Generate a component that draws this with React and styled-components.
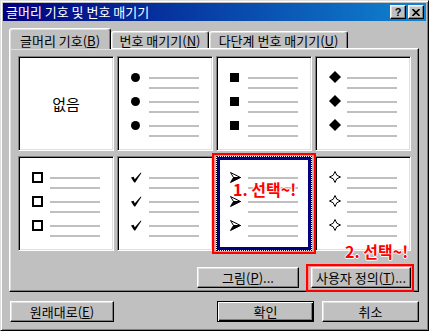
import React from "react";
import styled, { createGlobalStyle, css } from "styled-components";

const GlobalStyle = createGlobalStyle`
  html, body {
    margin: 0;
    padding: 0;
    background: #c0c0c0;
  }
  body {
    font-family: "Noto Sans CJK KR", "Noto Sans", sans-serif;
    font-size: 13px;
    color: #000;
  }
`;

const Frame = styled.div`
  position: relative;
  width: 429px;
  height: 331px;
`;

const Dialog = styled.div`
  box-sizing: border-box;
  width: 429px;
  height: 331px;
  padding: 2px;
  background: #c0c0c0;
  border: 1px solid;
  border-color: #dfdfdf #000 #000 #dfdfdf;
  box-shadow: inset 1px 1px 0 #fff, inset -1px -1px 0 #808080;
  overflow: hidden;
`;

const TitleBar = styled.div`
  display: flex;
  align-items: center;
  height: 18px;
  padding: 0 2px 0 3px;
  background: linear-gradient(to right, #000080, #1084d0);
  color: #fff;
  font-size: 13px;
`;

const TitleText = styled.span`
  flex: 1;
  line-height: 18px;
  white-space: nowrap;
`;

const TitleButtons = styled.div`
  display: flex;
  gap: 2px;
`;

const TitleButton = styled.div`
  box-sizing: border-box;
  width: 16px;
  height: 14px;
  display: flex;
  align-items: center;
  justify-content: center;
  background: #c0c0c0;
  border: 1px solid;
  border-color: #fff #000 #000 #fff;
  box-shadow: inset -1px -1px 0 #808080, inset 1px 1px 0 #dfdfdf;
  color: #000;
  font-family: "Liberation Sans", sans-serif;
  font-weight: bold;
  font-size: 11px;
  line-height: 1;
`;

const Body = styled.div`
  padding: 7px 0 0 6px;
`;

const TabStrip = styled.div`
  position: relative;
  z-index: 1;
  display: flex;
  align-items: flex-end;
  height: 20px;
`;

const Tab = styled.div`
  box-sizing: border-box;
  width: ${(p) => p.$w}px;
  height: ${(p) => (p.$active ? 21 : 17)}px;
  margin-bottom: ${(p) => (p.$active ? -1 : 0)}px;
  padding-top: ${(p) => (p.$active ? 2 : 0)}px;
  display: flex;
  align-items: center;
  justify-content: center;
  background: #c0c0c0;
  border: 1px solid;
  border-bottom: none;
  border-color: #fff #000 transparent #fff;
  border-radius: 3px 3px 0 0;
  box-shadow: inset -1px 0 0 #808080, inset 1px 1px 0 #dfdfdf;
  white-space: nowrap;
`;

const Panel = styled.div`
  box-sizing: border-box;
  width: 410px;
  height: 244px;
  padding: 7px 7px 3px 8px;
  display: flex;
  flex-direction: column;
  border: 1px solid;
  border-color: #fff #000 #000 #fff;
  box-shadow: inset -1px -1px 0 #808080, inset 1px 1px 0 #dfdfdf;
`;

const Grid = styled.div`
  display: grid;
  grid-template-columns: repeat(4, 96px);
  grid-auto-rows: 95px;
  column-gap: 3px;
  row-gap: 5px;
`;

const Cell = styled.div`
  box-sizing: border-box;
  background: #fff;
  padding: 14px 0 0 13px;
  border: 1px solid;
  border-color: #808080 #fff #fff #808080;
  box-shadow: inset 1px 1px 0 #000, inset -1px -1px 0 #dfdfdf;
  ${(p) =>
    p.$selected &&
    css`
      border: 1px dotted #000;
      box-shadow: inset 0 0 0 3px #000080;
    `}
`;

const NoneCell = styled(Cell)`
  padding: 0;
  display: flex;
  align-items: center;
  justify-content: center;
  font-size: 15px;
`;

const Item = styled.div`
  display: flex;
  height: 24px;
`;

const Marker = styled.div`
  width: 12px;
  height: 12px;
  margin-right: 6px;
  display: flex;
  align-items: center;
  justify-content: flex-start;
`;

const Lines = styled.div`
  padding-top: 6px;
  display: flex;
  flex-direction: column;
  gap: 8px;
`;

const Line = styled.div`
  width: 50px;
  height: 2px;
  background: #c0c0c0;
`;

const Dot = styled.div`
  width: 9px;
  height: 9px;
  border-radius: 50%;
  background: #000;
`;

const Square = styled.div`
  box-sizing: border-box;
  width: ${(p) => (p.$hollow ? 11 : 9)}px;
  height: ${(p) => (p.$hollow ? 11 : 9)}px;
  background: ${(p) => (p.$hollow ? "#fff" : "#000")};
  border: ${(p) => (p.$hollow ? "2px solid #000" : "none")};
`;

const ButtonRow = styled.div`
  margin-top: 16px;
  display: flex;
  justify-content: flex-end;
  gap: 12px;
`;

const Button = styled.div`
  box-sizing: border-box;
  width: ${(p) => p.$w}px;
  height: 21px;
  display: flex;
  align-items: center;
  justify-content: center;
  background: #c0c0c0;
  border: 1px solid;
  border-color: #fff #000 #000 #fff;
  box-shadow: inset -1px -1px 0 #808080, inset 1px 1px 0 #dfdfdf;
  white-space: nowrap;
  ${(p) =>
    p.$default &&
    css`
      border-color: #000;
      box-shadow: inset 1px 1px 0 #fff, inset -1px -1px 0 #000,
        inset -2px -2px 0 #808080;
    `}
`;

const Footer = styled.div`
  margin-top: 9px;
  width: 410px;
  padding-left: 1px;
  box-sizing: border-box;
  display: flex;
  justify-content: space-between;
`;

const FooterRight = styled.div`
  display: flex;
  gap: 8px;
`;

const U = styled.span`
  text-decoration: underline;
`;

const RedBox = styled.div`
  position: absolute;
  box-sizing: border-box;
  left: ${(p) => p.$x}px;
  top: ${(p) => p.$y}px;
  width: ${(p) => p.$w}px;
  height: ${(p) => p.$h}px;
  border: 2px solid #ff0000;
  box-shadow: inset 0 0 0 1px #ff8a8a;
  pointer-events: none;
`;

const RedNote = styled.div`
  position: absolute;
  left: ${(p) => p.$x}px;
  top: ${(p) => p.$y}px;
  color: #ff0000;
  font-weight: bold;
  font-size: 16px;
  line-height: 18px;
  white-space: nowrap;
  text-shadow: -1px 0 #fff, 1px 0 #fff, 0 -1px #fff, 0 1px #fff;
`;

const Diamond = () => (
  <svg width="12" height="12" viewBox="0 0 12 12">
    <polygon points="6,0 12,6 6,12 0,6" fill="#000" />
  </svg>
);

const Check = () => (
  <svg width="11" height="11" viewBox="0 0 11 11">
    <path d="M0 5.5 L2.6 4.8 L3.8 7.2 L9.8 0.6 L10.4 1.1 L4.2 10.4 L3.2 10.4 Z" fill="#000" />
  </svg>
);

const Arrow = () => (
  <svg width="11" height="11" viewBox="0 0 11 11">
    <polygon points="0.5,0.5 10.5,5.5 3.5,5.5" fill="#fff" stroke="#000" strokeWidth="1" strokeLinejoin="round" />
    <polygon points="3.5,5.5 10.5,5.5 0.5,10.5" fill="#000" stroke="#000" strokeWidth="1" strokeLinejoin="round" />
  </svg>
);

const Star = () => (
  <svg width="12" height="12" viewBox="0 0 12 12">
    <path
      d="M6 0.5 Q6.8 5.2 11.5 6 Q6.8 6.8 6 11.5 Q5.2 6.8 0.5 6 Q5.2 5.2 6 0.5 Z"
      fill="#fff"
      stroke="#000"
      strokeWidth="1"
    />
  </svg>
);

const markers = {
  dot: <Dot />,
  square: <Square />,
  diamond: <Diamond />,
  box: <Square $hollow />,
  check: <Check />,
  arrow: <Arrow />,
  star: <Star />,
};

const BulletCell = ({ kind, selected }) => (
  <Cell $selected={selected}>
    {[0, 1, 2].map((i) => (
      <Item key={i}>
        <Marker>{markers[kind]}</Marker>
        <Lines>
          <Line />
          <Line />
        </Lines>
      </Item>
    ))}
  </Cell>
);

const CloseGlyph = () => (
  <svg width="8" height="7" viewBox="0 0 8 7">
    <path d="M0.5 0 L7.5 7 M7.5 0 L0.5 7" stroke="#000" strokeWidth="1.6" />
  </svg>
);

const App = () => {
  return (
    <Frame>
      <GlobalStyle />
      <Dialog>
        <TitleBar>
          <TitleText>글머리 기호 및 번호 매기기</TitleText>
          <TitleButtons>
            <TitleButton>?</TitleButton>
            <TitleButton>
              <CloseGlyph />
            </TitleButton>
          </TitleButtons>
        </TitleBar>
        <Body>
          <TabStrip>
            <Tab $active $w={102}>
              글머리 기호(<U>B</U>)
            </Tab>
            <Tab $w={98}>
              번호 매기기(<U>N</U>)
            </Tab>
            <Tab $w={139}>
              다단계 번호 매기기(<U>U</U>)
            </Tab>
          </TabStrip>
          <Panel>
            <Grid>
              <NoneCell>없음</NoneCell>
              <BulletCell kind="dot" />
              <BulletCell kind="square" />
              <BulletCell kind="diamond" />
              <BulletCell kind="box" />
              <BulletCell kind="check" />
              <BulletCell kind="arrow" selected />
              <BulletCell kind="star" />
            </Grid>
            <ButtonRow>
              <Button $w={102}>
                그림(<U>P</U>)...
              </Button>
              <Button $w={100}>
                사용자 정의(<U>T</U>)...
              </Button>
            </ButtonRow>
          </Panel>
          <Footer>
            <Button $w={104}>
              원래대로(<U>E</U>)
            </Button>
            <FooterRight>
              <Button $w={97} $default>
                확인
              </Button>
              <Button $w={97}>취소</Button>
            </FooterRight>
          </Footer>
        </Body>
      </Dialog>
      <RedBox $x={212} $y={153} $w={104} $h={101} />
      <RedBox $x={306} $y={264} $w={108} $h={28} />
      <RedNote $x={233} $y={180}>
        1. 선택~!
      </RedNote>
      <RedNote $x={345} $y={242}>
        2. 선택~!
      </RedNote>
    </Frame>
  );
};

export default App;
